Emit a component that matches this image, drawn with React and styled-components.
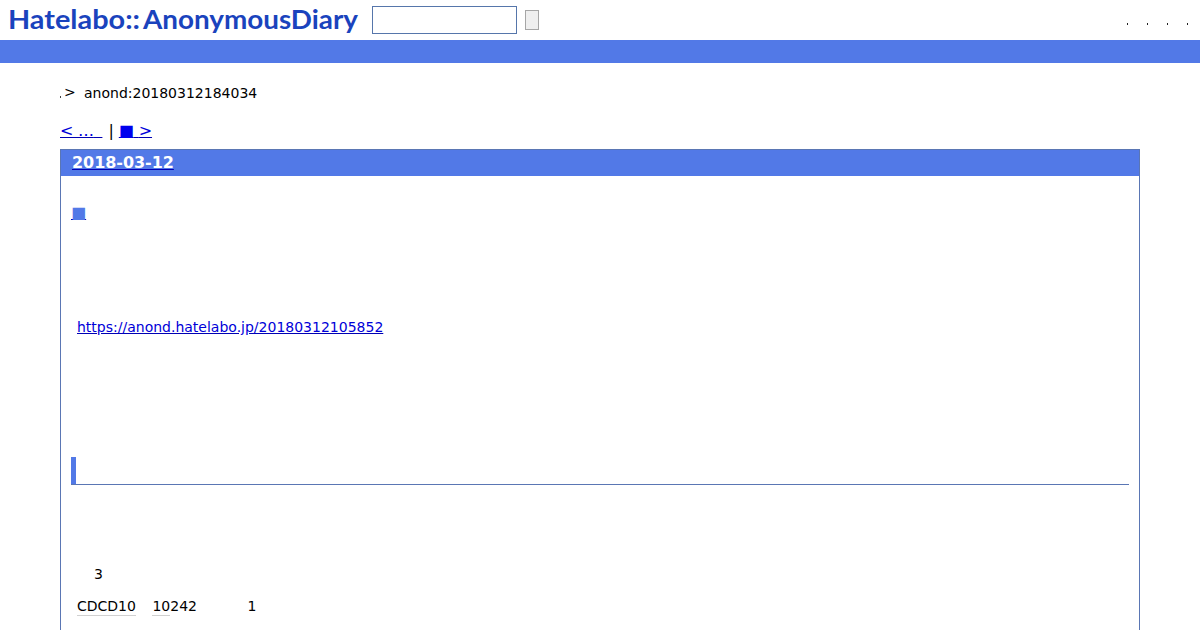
import React from "react";
import styled, { createGlobalStyle } from "styled-components";

const GlobalStyle = createGlobalStyle`
  * { box-sizing: border-box; }
  html, body { margin: 0; height: 630px; overflow: hidden; background: #fff; }
  body { font-family: "DejaVu Sans", sans-serif; font-size: 14px; line-height: 20px; color: #000; }
  a { color: #0000d8; text-decoration-color: #0000b4; }
`;

const Header = styled.header`
  display: flex;
  height: 40px;
  padding-left: 8px;
`;

const Logo = styled.svg`
  display: block;
  width: 352px;
  height: 40px;
  font: 700 26.5px "Lato", sans-serif;
  fill: #1a43bd;
`;

const SearchForm = styled.form`
  display: flex;
  align-items: center;
  gap: 8px;
  margin-left: 12px;
`;

const SearchInput = styled.input`
  width: 145px;
  height: 28px;
  border: 1px solid #5676ab;
  border-radius: 0;
  outline: none;
`;

const SearchButton = styled.button`
  width: 14px;
  height: 20px;
  padding: 0;
  border: 1px solid #a6a6a6;
  border-radius: 0;
  background: #efefef;
`;

const Menu = styled.ul`
  display: flex;
  gap: 19px;
  margin: 23px 12px 0 auto;
  padding: 0;
  list-style: none;
`;

const MenuMark = styled.li`
  width: 1px;
  height: 2px;
  background: #222;
`;

const Band = styled.div`
  height: 23px;
  background: #5279e7;
`;

const Main = styled.main`
  padding: 20px 60px 0;
`;

const Breadcrumb = styled.div`
  display: flex;
  height: 20px;
  white-space: pre;
`;

const CrumbMark = styled.span`
  width: 1px;
  height: 2px;
  margin: 13px 3px 0 0;
  background: #444;
`;

const CrumbSeparator = styled.span`
  width: 20px;
  margin-top: -1px;
`;

const Pager = styled.nav`
  display: flex;
  height: 20px;
  margin-top: 18px;
  font-size: 16px;
  white-space: pre;

  a { letter-spacing: -0.2px; }
`;

const PagerDivider = styled.span`
  margin: 0 5px 0 6px;
`;

const PagerMark = styled.span`
  color: #0000ee;
`;

const Spacer = styled.span`
  letter-spacing: ${(p) => p.$extra}px;
`;

const Day = styled.section`
  height: 481px;
  margin-top: 8px;
  border: 1px solid #5a76b4;
  border-bottom: 0;
`;

const DayTitle = styled.h2`
  height: 26px;
  margin: 0;
  padding: 3px 11px;
  background: #5279e7;
  font-size: 16px;
  line-height: 20px;
  letter-spacing: -0.05px;

  span { color: #fff; }
`;

const DayBody = styled.div`
  padding: 0 10px;
`;

const EntryTitle = styled.h3`
  height: 20px;
  margin: 27px 0 0;
  font-size: 16px;
  font-weight: 400;

  a { color: #101080; }
  span { color: #5279e7; }
`;

const Paragraph = styled.p`
  display: flex;
  height: 20px;
  margin: ${(p) => p.$top}px 0 0;
  padding-left: ${(p) => p.$indent || 6}px;
`;

const SectionHeading = styled.h4`
  height: 28px;
  margin: 120px 0 0;
  border-bottom: 1px solid #5a76b4;
  background: linear-gradient(#5279e7, #5279e7) left / 5px 100% no-repeat border-box;
`;

const Keyword = styled.span`
  display: inline-block;
  height: 20px;
  border-bottom: 1px solid #d0d0d0;
`;

const Count = styled.span`
  margin-left: ${(p) => p.$left}px;
`;

export default function App() {
  return (
    <>
      <GlobalStyle />
      <Header>
        <Logo>
          <text x="0" y="29" textLength="132" lengthAdjust="spacingAndGlyphs">Hatelabo::</text>
          <text x="135" y="29" textLength="215" lengthAdjust="spacingAndGlyphs">AnonymousDiary</text>
        </Logo>
        <SearchForm>
          <SearchInput aria-label="Search" />
          <SearchButton type="button" aria-label="Submit" />
        </SearchForm>
        <Menu>
          <MenuMark />
          <MenuMark />
          <MenuMark />
          <MenuMark />
        </Menu>
      </Header>
      <Band />
      <Main>
        <Breadcrumb>
          <CrumbMark />
          <CrumbSeparator>&gt;</CrumbSeparator>
          <span>anond:20180312184034</span>
        </Breadcrumb>
        <Pager>
          <a href="#prev">&lt; …<Spacer $extra={3.4}>{"\u00a0"}</Spacer></a>
          <PagerDivider>|</PagerDivider>
          <a href="#next"><PagerMark>■</PagerMark><Spacer $extra={0}>{"\u00a0"}</Spacer>&gt;</a>
        </Pager>
        <Day>
          <DayTitle><a href="#day"><span>2018-03-12</span></a></DayTitle>
          <DayBody>
            <EntryTitle><a href="#entry"><span>■</span></a></EntryTitle>
            <Paragraph $top={94}>
              <a href="#source">https://anond.hatelabo.jp/20180312105852</a>
            </Paragraph>
            <SectionHeading />
            <Paragraph $top={79} $indent={23}>3</Paragraph>
            <Paragraph $top={12}>
              <Keyword>CDCD10</Keyword>
              <Count $left={16.5}><Keyword>10</Keyword>242</Count>
              <Count $left={50.5}>1</Count>
            </Paragraph>
          </DayBody>
        </Day>
      </Main>
    </>
  );
}
